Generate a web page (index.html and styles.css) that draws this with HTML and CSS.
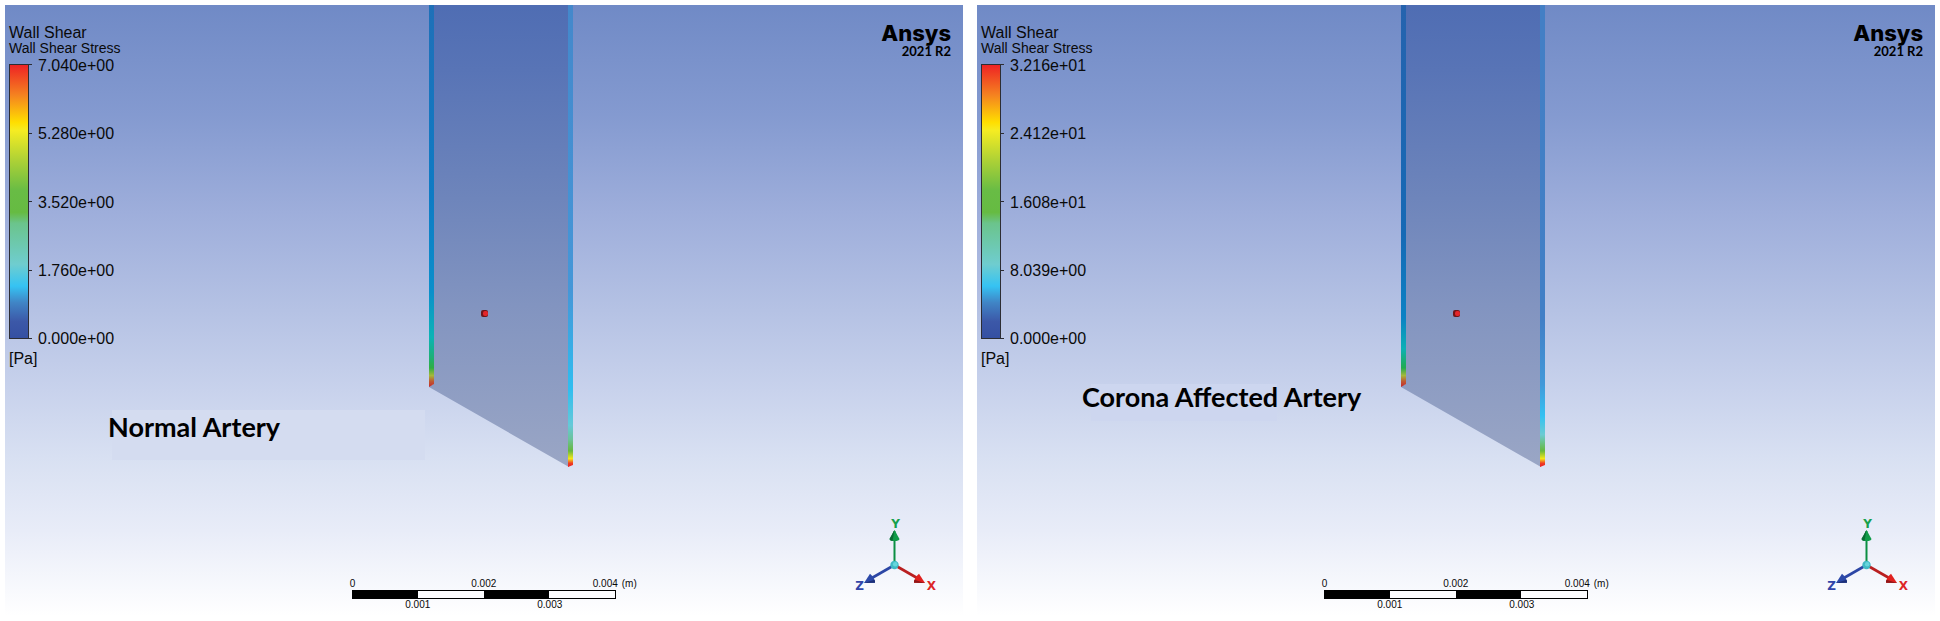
FILE: index.html
```html
<!DOCTYPE html>
<html lang="en">
<head>
<meta charset="utf-8">
<title>Wall Shear Stress</title>
<link rel="stylesheet" href="styles.css">
</head>
<body>
<svg class="defs" aria-hidden="true">
  <defs>
    <linearGradient id="lumen" x1="0" y1="0" x2="0" y2="1">
      <stop offset="0" stop-color="#4f6db3"/><stop offset=".14" stop-color="#5874b6"/>
      <stop offset=".42" stop-color="#6e85bb"/><stop offset=".65" stop-color="#8294c0"/>
      <stop offset="1" stop-color="#9aa6c5"/>
    </linearGradient>
    <linearGradient id="wall-left" x1="0" y1="0" x2="0" y2="1">
      <stop offset="0" stop-color="#1f70b8"/><stop offset=".5" stop-color="#0e7bc4"/>
      <stop offset=".75" stop-color="#0a8fcb"/><stop offset=".87" stop-color="#0cb3b5"/>
      <stop offset=".92" stop-color="#1cb07a"/><stop offset=".95" stop-color="#2fae43"/>
      <stop offset=".97" stop-color="#a5b83a"/><stop offset=".985" stop-color="#bf5a32"/>
      <stop offset="1" stop-color="#c5282c"/>
    </linearGradient>
    <linearGradient id="wall-left-cool" x1="0" y1="0" x2="0" y2="1">
      <stop offset="0" stop-color="#2563ae"/><stop offset=".6" stop-color="#1669b5"/>
      <stop offset=".82" stop-color="#0b82c4"/><stop offset=".9" stop-color="#0cb0b5"/>
      <stop offset=".95" stop-color="#22ab50"/><stop offset=".97" stop-color="#a5b83a"/>
      <stop offset=".985" stop-color="#bf5a32"/><stop offset="1" stop-color="#c5282c"/>
    </linearGradient>
    <linearGradient id="wall-right" x1="0" y1="0" x2="0" y2="1">
      <stop offset="0" stop-color="#4488cb"/><stop offset=".62" stop-color="#4597d8"/>
      <stop offset=".83" stop-color="#2fbdf0"/><stop offset=".91" stop-color="#66c9d8"/>
      <stop offset=".94" stop-color="#6cc39a"/><stop offset=".965" stop-color="#67b93e"/>
      <stop offset=".982" stop-color="#f4e81a"/><stop offset=".992" stop-color="#ef3b24"/>
      <stop offset="1" stop-color="#ea2027"/>
    </linearGradient>
    <linearGradient id="wall-right-cool" x1="0" y1="0" x2="0" y2="1">
      <stop offset="0" stop-color="#437fc5"/><stop offset=".68" stop-color="#417fc6"/>
      <stop offset=".82" stop-color="#4298d9"/><stop offset=".89" stop-color="#33c1f2"/>
      <stop offset=".93" stop-color="#6ccbd3"/><stop offset=".965" stop-color="#67b93e"/>
      <stop offset=".982" stop-color="#f4e81a"/><stop offset=".992" stop-color="#ef3b24"/>
      <stop offset="1" stop-color="#ea2027"/>
    </linearGradient>
    <symbol id="triad" viewBox="0 0 90 80">
      <path d="M43.5 14h2v34h-2z" fill="#0b8f43"/>
      <path d="M44.500 13l5 9q-.5 2-5 2t-5-2z" fill="#0f9b48"/>
      <path d="M44.500 13l-5 9q.5 2 3 2z" fill="#0a6b35"/>
      <path d="M44.500 48L68 61.500" stroke="#b91f20" stroke-width="2.600"/>
      <path d="M75 66l-11-.3q.2-5 5-9z" fill="#e0211f"/>
      <path d="M75 66l-11-.3q-.2-1.700.4-3z" fill="#8f1718"/>
      <path d="M44.500 48L21 61.500" stroke="#2c46a5" stroke-width="2.600"/>
      <path d="M14 66l11-.3q-.2-5-5-9z" fill="#2c49a8"/>
      <path d="M14 66l11-.3q.2-1.700-.4-3z" fill="#1c2f78"/>
      <circle cx="44.500" cy="48" r="4.200" fill="#40b9c4"/>
      <circle cx="45.200" cy="47.200" r="2.300" fill="#66d6dc"/>
      <text class="axis" x="45.500" y="11" fill="#17a04b">Y</text>
      <text class="axis" x="9.500" y="73" fill="#3145a8">Z</text>
      <text class="axis" x="81.500" y="73" fill="#dd2526">X</text>
    </symbol>
  </defs>
</svg>

<main class="comparison">
  <figure class="view">
    <svg class="artery" viewBox="0 0 144 464" role="img" aria-label="Normal artery section">
      <path d="M4 0H140V462L0 382V380H4z" fill="url(#lumen)"/>
      <path d="M0 0H5V379L0 382z" fill="url(#wall-left)"/>
      <path d="M139 0H144V460L139 462z" fill="url(#wall-right)"/>
      <rect x="52" y="305" width="7" height="7" rx="2" fill="#6f1519"/>
      <rect x="54" y="306" width="5" height="5" rx="2" fill="#e3252a"/>
    </svg>
    <div class="patch patch-normal"></div>
    <figcaption class="caption caption-normal">Normal Artery</figcaption>
    <header class="top">
      <section class="legend">
        <h2 class="title">Wall Shear</h2>
        <p class="subtitle">Wall Shear Stress</p>
        <div class="range">
          <div class="colorbar"></div>
          <div class="ticks"><i></i><i></i><i></i><i></i><i></i></div>
          <div class="values"><span>7.040e+00</span><span>5.280e+00</span><span>3.520e+00</span><span>1.760e+00</span><span>0.000e+00</span></div>
        </div>
        <p class="unit">[Pa]</p>
      </section>
      <div class="brand"><strong class="name">Ansys</strong><span class="release">2021 R2</span></div>
    </header>
    <footer class="bottom">
      <div class="scale">
        <div class="ruler">
          <div class="upper"><span>0</span><span>0.002</span><span>0.004</span></div>
          <div class="segments"><i></i><i></i><i></i><i></i></div>
          <div class="lower"><span>0.001</span><span>0.003</span></div>
        </div>
        <span>(m)</span>
      </div>
      <svg class="triad" role="img" aria-label="Axes"><use href="#triad"/></svg>
    </footer>
  </figure>

  <figure class="view">
    <svg class="artery" viewBox="0 0 144 464" role="img" aria-label="Corona affected artery section">
      <path d="M4 0H140V462L0 382V380H4z" fill="url(#lumen)"/>
      <path d="M0 0H5V379L0 382z" fill="url(#wall-left-cool)"/>
      <path d="M139 0H144V460L139 462z" fill="url(#wall-right-cool)"/>
      <rect x="52" y="305" width="7" height="7" rx="2" fill="#6f1519"/>
      <rect x="54" y="306" width="5" height="5" rx="2" fill="#e3252a"/>
    </svg>
    <div class="patch patch-corona"></div>
    <figcaption class="caption caption-corona">Corona Affected Artery</figcaption>
    <header class="top">
      <section class="legend">
        <h2 class="title">Wall Shear</h2>
        <p class="subtitle">Wall Shear Stress</p>
        <div class="range">
          <div class="colorbar"></div>
          <div class="ticks"><i></i><i></i><i></i><i></i><i></i></div>
          <div class="values"><span>3.216e+01</span><span>2.412e+01</span><span>1.608e+01</span><span>8.039e+00</span><span>0.000e+00</span></div>
        </div>
        <p class="unit">[Pa]</p>
      </section>
      <div class="brand"><strong class="name">Ansys</strong><span class="release">2021 R2</span></div>
    </header>
    <footer class="bottom">
      <div class="scale">
        <div class="ruler">
          <div class="upper"><span>0</span><span>0.002</span><span>0.004</span></div>
          <div class="segments"><i></i><i></i><i></i><i></i></div>
          <div class="lower"><span>0.001</span><span>0.003</span></div>
        </div>
        <span>(m)</span>
      </div>
      <svg class="triad" role="img" aria-label="Axes"><use href="#triad"/></svg>
    </footer>
  </figure>
</main>
</body>
</html>
```

FILE: styles.css
```css
* { box-sizing: border-box; }
body {
  margin: 0;
  background: #fff;
  color: #0a0a0a;
  font-family: "Liberation Sans", Arial, sans-serif;
}
h2, p, figure { margin: 0; }
.defs { position: absolute; width: 0; height: 0; }

.comparison {
  display: grid;
  grid-template-columns: 1fr 1fr;
  gap: 14px;
  min-height: 100vh;
  padding: 5px;
}
.view {
  position: relative;
  display: flex;
  flex-direction: column;
  justify-content: space-between;
  background: linear-gradient(#708ac6 0%, #849ad0 18%, #9eaedb 34%, #b5c2e4 50%, #c8d2ec 63%, #d8e0f2 74%, #e8ecf8 86%, #fff 100%);
}

.artery {
  position: absolute;
  top: 0;
  left: 44.3%;
  width: 144px;
  height: 464px;
}
.patch { position: absolute; }
.patch-normal { left: 107px; top: 405px; width: 313px; height: 50px; background: #d4dcf0; }
.patch-corona { left: 114px; top: 379px; width: 186px; height: 37px; background: #cdd6ef; }
.caption {
  position: absolute;
  color: #000;
  font: bold 27px/32px Lato, "Open Sans", sans-serif;
  white-space: nowrap;
}
.caption-normal { left: 103px; top: 406px; }
.caption-corona { left: 105px; top: 376px; }

.top {
  position: relative;
  display: flex;
  justify-content: space-between;
  padding: 18px 12px 0 4px;
}
.title { font-size: 16px; font-weight: normal; line-height: 20px; }
.subtitle { font-size: 14px; line-height: 10px; }
.range { display: flex; height: 292px; margin-top: 2px; }
.colorbar {
  width: 20px;
  margin: 9px 0 8px;
  border: 1px solid #2d2d33;
  background: linear-gradient(#ee2324 0%, #f58220 11%, #ffde00 21%, #f5ec22 24%, #add136 35%, #68bc45 46%, #66bb42 54%, #6bc48c 58%, #6fcdcf 73%, #35c3f3 81%, #4085c6 87%, #3c58a8 94%, #3550a2 100%);
}
.ticks {
  display: flex;
  flex-direction: column;
  justify-content: space-between;
  width: 3px;
  margin: 9px 0 8px;
}
.ticks i { height: 1px; background: #2d2d33; }
.values {
  display: flex;
  flex-direction: column;
  justify-content: space-between;
  margin-left: 6px;
  padding-top: 3px;
  font-size: 16px;
  line-height: 16px;
}
.unit { font-size: 16px; line-height: 24px; }

.brand {
  display: flex;
  flex-direction: column;
  align-items: flex-end;
  color: #000;
}
.name { font: 800 22px/20px Inter, sans-serif; }
.release { font: bold 13px/16px Lato, sans-serif; }

.bottom {
  position: relative;
  display: flex;
  align-items: flex-end;
  justify-content: space-between;
  padding: 0 23px 5px 36.2%;
}
.scale { display: flex; gap: 6px; font-size: 10px; line-height: 12px; }
.ruler { width: 264px; }
.upper { display: grid; grid-template-columns: 1fr auto 1fr; margin: 0 -2px; }
.upper span:last-child { text-align: right; }
.segments { display: grid; grid-template-columns: repeat(4, 1fr); height: 9px; border: 1px solid #000; background: #fdfdff; }
.segments i:nth-child(odd) { background: #000; }
.lower { display: flex; justify-content: space-around; }
.triad { width: 90px; height: 80px; margin-bottom: 14px; }
.axis { font: bold 12px "DejaVu Sans", sans-serif; text-anchor: middle; }
```
